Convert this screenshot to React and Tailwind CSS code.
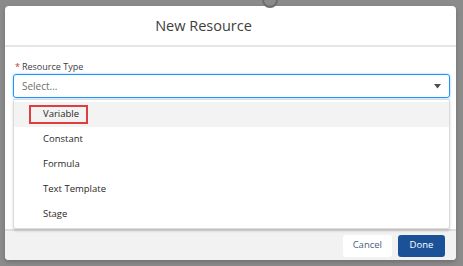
const items = ['Variable', 'Constant', 'Formula', 'Text Template', 'Stage'];

export default function App() {
  return (
    <div
      className="relative w-[463px] h-[266px] bg-[#8b8b8b] pt-[6px] pl-[5px] overflow-hidden"
      style={{ fontFamily: '"Open Sans", "Liberation Sans", sans-serif' }}
    >
      <div className="absolute left-[262px] top-[-8px] w-[16px] h-[16px] rounded-full border-2 border-[#6d6d6d]" />
      <div className="w-[451px] h-[254px] bg-white rounded-[4px] flex flex-col overflow-hidden shadow-[0_2px_4px_rgba(0,0,0,0.2)]">
        <div className="h-[41px] flex items-center justify-center pr-[54px] pt-[1px] border-b-2 border-[#e5e5e5] shrink-0">
          <h2 className="text-[14.5px] text-[#3e3e3c]">New Resource</h2>
        </div>
        <div className="flex-1 px-[8px] pt-[15px]">
          <label className="flex items-center text-[9px] text-[#3e3e3c] leading-none ml-[2px]">
            <span className="text-[#c23934] mr-[2px]">*</span>Resource Type
          </label>
          <div className="relative mt-[3px]">
            <div className="h-[24px] w-[437px] border border-[#1b96ff] rounded-[3px] flex items-center justify-between pl-[8px] pr-[8px] shadow-[0_0_2px_#6ab4ff]">
              <span className="text-[10px] text-[#706e6b]">Select...</span>
              <svg width="7" height="5" viewBox="0 0 7 5">
                <path d="M0 0 H7 L3.5 4.5 Z" fill="#514f4d" />
              </svg>
            </div>
            <ul className="absolute left-0 top-full mt-[1px] w-[437px] h-[130px] bg-white border border-[#dddbda] rounded-b-[3px] shadow-[0_2px_3px_rgba(0,0,0,0.16)] pt-[2px]">
              {items.map((item, i) => (
                <li
                  key={item}
                  className={`h-[25px] flex items-center pl-[15px] text-[9.5px] text-[#2b2826] ${i === 0 ? 'bg-[#f3f3f3]' : ''}`}
                >
                  <span
                    className={`h-[19px] flex items-center ${i === 0 ? 'border-2 border-[#e03e3e] px-[12px] w-[59px]' : 'px-[14px]'}`}
                  >
                    {item}
                  </span>
                </li>
              ))}
            </ul>
          </div>
        </div>
        <div className="h-[31px] shrink-0 bg-[#f3f2f2] border-t-2 border-[#e0e0e0] flex items-center justify-end gap-[6px] pr-[11px]">
          <button className="h-[22px] px-[10px] bg-white rounded-[3px] text-[9.5px] text-[#4a5f7a]">
            Cancel
          </button>
          <button className="h-[22px] w-[47px] bg-[#1b5297] rounded-[3px] text-[9.5px] text-white">
            Done
          </button>
        </div>
      </div>
    </div>
  );
}
